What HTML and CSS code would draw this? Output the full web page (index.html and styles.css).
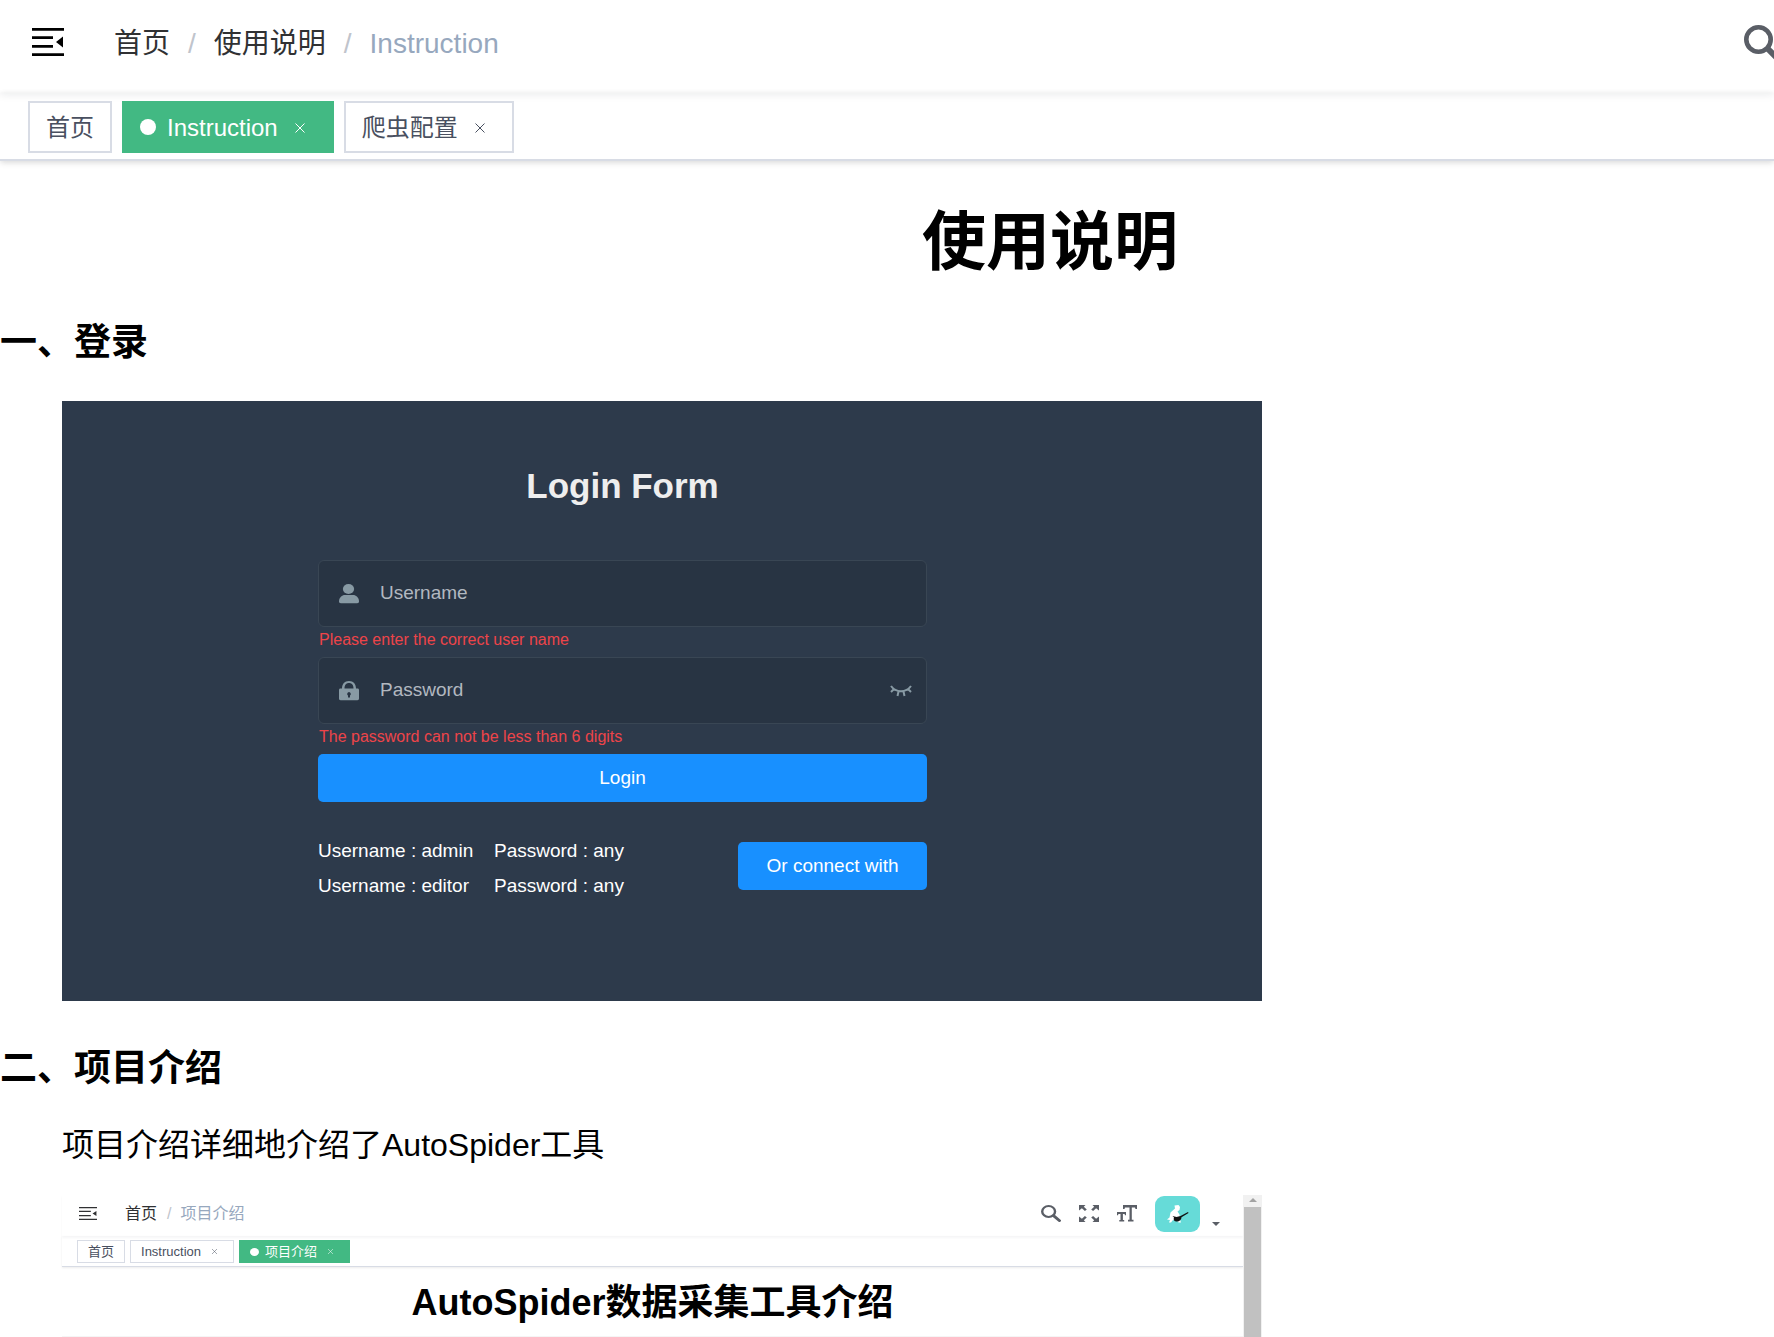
FILE: index.html
```html
<!DOCTYPE html>
<html lang="zh-CN">
<head>
<meta charset="utf-8">
<title>使用说明</title>
<link rel="stylesheet" href="styles.css">
</head>
<body>
<svg class="sprite" aria-hidden="true">
  <symbol id="menu" viewBox="0 0 32 28" preserveAspectRatio="none">
    <path d="M0 0h32v2.700H0zM0 8.300h21v2.700H0zM0 17h21v2.700H0zM0 25.300h32V28H0zM31 8.500v11L24 14z"/>
  </symbol>
  <symbol id="search" viewBox="0 0 38 38" preserveAspectRatio="none">
    <circle cx="14.500" cy="14.500" r="12.200" fill="none" stroke="currentColor" stroke-width="4.600"/>
    <path d="M24 24l11 11" fill="none" stroke="currentColor" stroke-width="6" stroke-linecap="round"/>
  </symbol>
</svg>
<div class="app">
  <header class="navbar">
    <button class="hamburger" aria-label="菜单"><svg><use href="#menu"/></svg></button>
    <nav class="breadcrumb" aria-label="breadcrumb">
      <a href="#">首页</a><span class="sep">/</span><a href="#">使用说明</a><span class="sep">/</span><span class="current">Instruction</span>
    </nav>
    <button class="search" aria-label="搜索"><svg><use href="#search"/></svg></button>
  </header>
  <div class="tags">
    <div class="tag"><a href="#">首页</a></div>
    <div class="tag active"><i class="dot"></i><a href="#">Instruction</a><button class="close" aria-label="关闭"><svg viewBox="0 0 10 10"><path d="M.5.5l9 9M9.500.5l-9 9"/></svg></button></div>
    <div class="tag"><a href="#">爬虫配置</a><button class="close" aria-label="关闭"><svg viewBox="0 0 10 10"><path d="M.5.5l9 9M9.500.5l-9 9"/></svg></button></div>
  </div>

  <main>
    <h1>使用说明</h1>

    <h2>一、登录</h2>
    <section class="login">
      <form class="login-form">
        <h3>Login Form</h3>
        <div class="field">
          <svg class="field-icon" viewBox="0 0 20 20"><ellipse cx="9.500" cy="5" rx="5.600" ry="5"/><path d="M0 17.500c0-4 3-6.500 6-6.500h8c3 0 6 2.500 6 6.500 0 1-.7 1.700-1.800 1.700H1.800C.7 19.200 0 18.500 0 17.500z"/></svg>
          <input type="text" placeholder="Username" aria-label="Username">
        </div>
        <p class="error">Please enter the correct user name</p>
        <div class="field">
          <svg class="field-icon" viewBox="0 0 20 20"><path fill-rule="evenodd" d="M3 7.500C3 3 5.500 0 10 0s7 3 7 7.500h1.500c1 0 1.500.6 1.500 1.500v8.500c0 1-.6 1.700-1.600 1.700H1.600C.6 19.200 0 18.500 0 17.500V9c0-.9.5-1.500 1.500-1.500zM5.500 7.500h9C14.500 4.200 13 2 10 2S5.500 4.200 5.500 7.500zM10 11a2 2 0 0 0-1 3.600V16.500h2v-1.900A2 2 0 0 0 10 11z"/></svg>
          <input type="password" placeholder="Password" aria-label="Password">
          <button type="button" class="eye" aria-label="显示密码"><svg viewBox="0 0 22 12"><path d="M1 1c5 7 15 7 20 0M4 4L1 7M18 4l3 3M8.500 6.500l-1 4.500M13.500 6.500l1 4.500"/></svg></button>
        </div>
        <p class="error">The password can not be less than 6 digits</p>
        <button type="button" class="primary">Login</button>
        <div class="login-foot">
          <div class="tips">
            <span>Username : admin</span><span>Password : any</span>
            <span>Username : editor</span><span>Password : any</span>
          </div>
          <button type="button" class="primary connect">Or connect with</button>
        </div>
      </form>
    </section>

    <h2>二、项目介绍</h2>
    <p class="intro">项目介绍详细地介绍了AutoSpider工具</p>

    <section class="preview">
      <div class="preview-page">
        <div class="mini-nav">
          <svg class="mini-menu"><use href="#menu"/></svg>
          <div class="mini-crumb"><a href="#">首页</a><span class="sep">/</span><span class="current">项目介绍</span></div>
          <div class="mini-tools">
            <svg viewBox="0 0 38 38" preserveAspectRatio="none"><use href="#search" width="38" height="38"/></svg>
            <svg viewBox="0 0 20 17"><path d="M0 0h6.500L4.800 1.700l3 2.700-1.900 1.600-3-2.800L0 5.500zM20 0h-6.500l1.700 1.700-3 2.700 1.900 1.600 3-2.800L20 5.500zM0 17h6.500l-1.700-1.700 3-2.700-1.900-1.600-3 2.800L0 11.500zM20 17h-6.500l1.700-1.700-3-2.700 1.900-1.600 3 2.800 2.900-2.300z"/></svg>
            <svg viewBox="0 0 20 17"><path d="M6 0h14v4h-1.500L18 2.500h-3.200V14.800h1.700V16.500h-5.500V14.800h1.500V2.500H8L7.500 4H6zM0 7h9v3.200H8L7.600 9H5.900v6h1.300v1.500H2.300V15h1.200V9H1.400L1 10.200H0z"/></svg>
            <svg class="avatar" viewBox="0 0 45 36"><rect width="45" height="36" rx="9" fill="#66dbd8"/><path fill="#fff" d="M19.500 9.500l4-.5 1.500 2-.5 3-2 1.500 2 3 .5 5 1 3h-2.500l-1.500-2-4-.5-2 2.500h-2l1-2.500-3-.5 2.500-2 1-5 4.500-4z"/><path fill="#111" d="M17.500 20l4 1 4-1 7.500-4 .5.900-7 4.300c0 2.500-2 4.300-4.500 4.300s-4-1.500-3-4z"/></svg>
            <svg class="caret" viewBox="0 0 8 4"><path d="M0 0h8L4 4z"/></svg>
          </div>
        </div>
        <div class="mini-tags">
          <span class="mini-tag">首页</span>
          <span class="mini-tag">Instruction<svg viewBox="0 0 10 10"><path d="M0 0l10 10M10 0L0 10"/></svg></span>
          <span class="mini-tag active"><i></i>项目介绍<svg viewBox="0 0 10 10"><path d="M0 0l10 10M10 0L0 10"/></svg></span>
        </div>
        <h3 class="mini-title">AutoSpider数据采集工具介绍</h3>
      </div>
      <div class="mini-scroll"><svg viewBox="0 0 8 4"><path d="M0 4h8L4 0z"/></svg><div class="thumb"></div></div>
    </section>
  </main>
</div>
</body>
</html>
```
FILE: styles.css
```css
* { box-sizing: border-box; }
body {
  margin: 0;
  background: #fff;
  color: #000;
  font-family: "Liberation Sans", "Noto Sans CJK SC", sans-serif;
}
h1, h2, h3, p { margin: 0; }
a { color: inherit; text-decoration: none; }
button {
  padding: 0;
  border: 0;
  background: none;
  color: inherit;
  font: inherit;
}
svg { display: block; flex: none; fill: currentColor; }
.sprite { position: absolute; width: 0; height: 0; }

.app { overflow: hidden; }

.navbar {
  display: flex;
  align-items: center;
  height: 93px;
  padding: 0 0 9px 32px;
  box-shadow: 0 2px 8px rgba(0, 21, 41, .08);
}
.hamburger svg { width: 32px; height: 28px; }
.breadcrumb {
  display: flex;
  margin-left: 50px;
  padding-top: 3px;
  color: #303133;
  font-size: 28px;
  line-height: 40px;
}
.sep { margin: 0 18px; color: #c0c4cc; }
.current { color: #97a8be; }
.search { width: 30px; margin-left: auto; padding-top: 3px; overflow: hidden; color: #5a5e66; }
.search svg { width: 38px; height: 38px; }

.tags {
  display: flex;
  gap: 10px;
  height: 68px;
  padding: 8px 28px 0;
  border-bottom: 2px solid #d8dce5;
  box-shadow: 0 2px 6px rgba(0, 0, 0, .12), 0 0 6px rgba(0, 0, 0, .04);
}
.tag {
  display: flex;
  align-items: center;
  height: 52px;
  padding: 0 16px;
  border: 2px solid #d8dce5;
  background: #fff;
  color: #495060;
  font-size: 24px;
  line-height: 32px;
}
.tag a { padding-top: 2px; }
.tag.active { border-color: #42b983; background: #42b983; color: #fff; }
.dot {
  width: 16px;
  height: 16px;
  margin-right: 11px;
  border-radius: 50%;
  background: #fff;
}
.close {
  display: grid;
  place-items: center;
  width: 32px;
  height: 32px;
  padding-top: 2px;
  margin-left: 6px;
}
.close svg { width: 10px; height: 10px; stroke: currentColor; }

h1 {
  padding: 34px 0 0 326px;
  font-size: 64px;
  line-height: 94px;
  text-align: center;
}
h2 { padding: 26px 0 30px; font-size: 37px; line-height: 56px; }

.login {
  width: 1200px;
  height: 600px;
  margin-left: 62px;
  padding: 64px 335px 0 256px;
  background: #2d3a4b;
  color: #fff;
  font-size: 19px;
}
.login h3 {
  margin-bottom: 53px;
  color: #eee;
  font-size: 35px;
  line-height: 42px;
  text-align: center;
}
.field {
  display: flex;
  align-items: center;
  height: 67px;
  padding: 0 14px 0 20px;
  border: 1px solid #394654;
  border-radius: 6px;
  background: #283443;
  color: #889aa4;
}
.field-icon { width: 20px; height: 20px; }
.field input {
  flex: 1;
  min-width: 0;
  height: 46px;
  padding: 0 0 2px 21px;
  border: 0;
  outline: 0;
  background: none;
  color: #fff;
  font: inherit;
}
.field input::placeholder { color: #b2b8c0; opacity: 1; }
.eye svg {
  width: 22px;
  height: 12px;
  fill: none;
  stroke: currentColor;
  stroke-width: 2;
}
.error {
  padding: 1px 1px 5px;
  color: #ed4449;
  font-size: 16px;
  line-height: 24px;
}
.primary {
  display: block;
  width: 100%;
  height: 48px;
  border-radius: 5px;
  background: #1890ff;
  color: #fff;
}
.login-foot {
  display: flex;
  justify-content: space-between;
  margin-top: 31px;
}
.tips {
  display: grid;
  grid-template-columns: 176px auto;
  line-height: 35px;
}
.connect { width: 189px; margin-top: 9px; }

.login + h2 { padding: 40px 0 28px; }
.intro { padding: 0 62px; font-size: 32px; line-height: 40px; }

.preview {
  display: flex;
  width: 1200px;
  margin: 30px 0 0 62px;
}
.preview-page { flex: 1; }
.mini-nav {
  display: flex;
  height: 41px;
  padding: 0 23px 4px 17px;
  align-items: center;
  font-size: 16px;
  line-height: 24px;
  color: #303133;
  box-shadow: 0 2px 2px rgba(0, 21, 41, .04);
}
.mini-menu { width: 18px; height: 13px; }
.mini-crumb { display: flex; margin-left: 28px; }
.mini-crumb .sep { margin: 0 9px 0 10px; }
.mini-tools {
  display: flex;
  align-items: center;
  gap: 18px;
  margin-left: auto;
  color: #5a5e66;
}
.mini-tools svg { width: 20px; height: 17px; }
.mini-tools .avatar { width: 45px; height: 36px; }
.mini-tools .caret { width: 8px; height: 4px; margin: 20px 0 0 -6px; }
.mini-tags {
  display: flex;
  gap: 5px;
  height: 31px;
  padding: 4px 15px;
  border-bottom: 1px solid #d8dce5;
  box-shadow: 0 1px 2px rgba(0, 0, 0, .08);
}
.mini-tag {
  display: flex;
  align-items: center;
  height: 23px;
  padding: 0 10px;
  border: 1px solid #d8dce5;
  color: #495060;
  font-size: 13px;
  line-height: 20px;
}
.mini-tag.active { border-color: #42b983; background: #42b983; color: #fff; }
.mini-tag svg { width: 5px; height: 5px; margin: 0 6px 0 11px; stroke: currentColor; stroke-width: 1; }
.mini-tag i {
  width: 9px;
  height: 8px;
  margin-right: 6px;
  border-radius: 50%;
  background: #fff;
}
.mini-title {
  height: 70px;
  border-bottom: 1px solid #f5f5f5;
  font-size: 36px;
  line-height: 72px;
  text-align: center;
}
.mini-scroll { display: flex; flex-direction: column; width: 19px; padding: 0 1px; background: #f1f1f1; }
.mini-scroll svg { width: 8px; height: 4px; margin: 3px auto 5px; color: #a3a3a3; }
.thumb { flex: 1; background: #c1c1c1; }
```
